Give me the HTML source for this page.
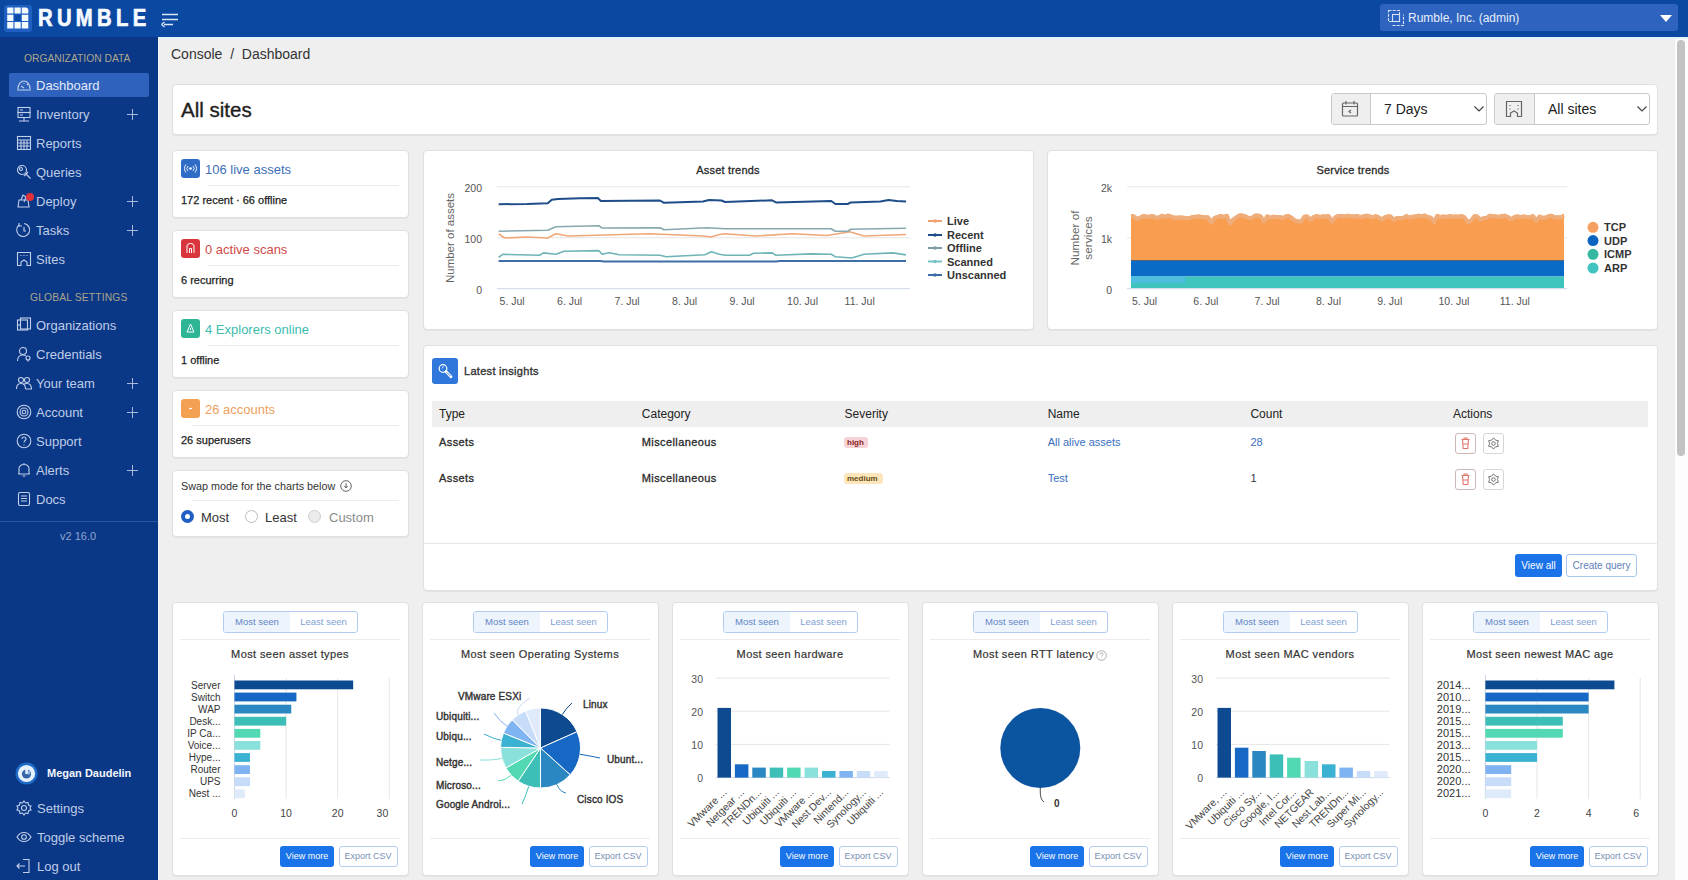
<!DOCTYPE html><html><head><meta charset="utf-8"><title>Rumble Dashboard</title><style>
*{box-sizing:border-box;margin:0;padding:0}
html,body{width:1688px;height:880px;overflow:hidden;background:#efefef;font-family:"Liberation Sans",sans-serif;color:#222}
.abs{position:absolute}
.hdr{position:absolute;left:0;top:0;width:1688px;height:37px;background:#0a48a2}
.side{position:absolute;left:0;top:37px;width:158px;height:843px;background:#0b3886}
.card{position:absolute;background:#fff;border-radius:4px;border:1px solid #e0e0e0;box-shadow:0 1px 1px rgba(0,0,0,.05)}
.t{position:absolute;white-space:nowrap;line-height:1}
.nav{position:absolute;left:36px;font-size:13px;color:#bfcde8;white-space:nowrap;line-height:1}
.plus{position:absolute;left:127px;width:11px;height:11px}
.plus:before{content:"";position:absolute;left:5px;top:0;width:1px;height:11px;background:#a9b9d8}
.plus:after{content:"";position:absolute;left:0;top:5px;width:11px;height:1px;background:#a9b9d8}
svg{position:absolute;overflow:visible}
</style></head><body>
<div class="hdr"></div>
<svg style="left:4px;top:5px" width="28" height="27" viewBox="0 0 28 27">
<rect x="0" y="0" width="28" height="27" rx="3" fill="#1f5fc2"/>
<path d="M3.2 2.4H9.4V8.6H3.2Z M10.5 2.4H16.7V8.6H10.5Z M17.8 2.4H21.5Q24.3 2.4 24.3 5.2V8.6H17.8Z M3.2 9.7H9.4V15.9H3.2Z M17.8 9.7H24.3V15.9H17.8Z M3.2 17H9.4V23.6H3.2Z M10.5 17H16.7V23.6H10.5Z M17.8 17H24.3V23.6H17.8Z" fill="#f4fbff"/>
<rect x="10.5" y="9.7" width="6.2" height="6.2" fill="#0c4aa8"/>
</svg>
<div class="t" style="left:38px;top:7.2px;font-size:23px;font-weight:bold;color:#f4faff;letter-spacing:4.9px;transform:scaleX(0.88);transform-origin:0 0;-webkit-text-stroke:0.7px #f4faff">RUMBLE</div>
<svg style="left:161px;top:13px" width="18" height="15" viewBox="0 0 18 15">
<path d="M1 1.5H17M1 6.5H17M3 11.5H12" stroke="#dbe6f7" stroke-width="1.6" fill="none"/>
<path d="M0.5 11.5L3.5 9M0.5 11.5L3.5 14" stroke="#dbe6f7" stroke-width="1.4" fill="none"/>
</svg>
<div class="abs" style="left:1380px;top:4px;width:298px;height:27px;background:#2e64bf;border-radius:3px"></div>
<svg style="left:1386px;top:8px" width="19" height="19" viewBox="0 0 19 19" fill="none" stroke="#d6e2f7" stroke-width="1.1">
<rect x="2.5" y="2.5" width="11" height="11" stroke-dasharray="3 1.2"/>
<rect x="6.5" y="6.5" width="7" height="7"/>
<path d="M6.5 17.5H17.5V6.5" stroke-dasharray="3 1.2"/>
</svg>
<div class="t" style="left:1408px;top:12px;font-size:12px;color:#e8eefa">Rumble, Inc. (admin)</div>
<svg style="left:1660px;top:15px" width="12" height="7" viewBox="0 0 12 7"><path d="M0 0H12L6 7Z" fill="#fff"/></svg>
<div class="abs" style="left:158px;top:37px;width:1530px;height:2px;background:#e4f3fb"></div>
<div class="side"></div>
<div class="t" style="left:24px;top:54px;font-size:10.3px;color:#aaa58c;letter-spacing:0px">ORGANIZATION DATA</div>
<div class="abs" style="left:9px;top:73px;width:140px;height:24px;background:#2f62bd;border-radius:2px"></div>
<svg style="left:16px;top:77px" width="16" height="16" viewBox="0 0 16 16" fill="none" stroke="#c3d0ea" stroke-width="1.1"><path d="M1 13H15M2 12C2 7 5 4 8 4C11 4 14 7 14 12M5 9L8 11M8 6V7M11 8L12 7"/></svg>
<div class="nav" style="top:79px;color:#e4ebf8">Dashboard</div>
<svg style="left:16px;top:106px" width="16" height="16" viewBox="0 0 16 16" fill="none" stroke="#c3d0ea" stroke-width="1.1"><rect x="2" y="1.5" width="12" height="5"/><rect x="2" y="6.5" width="12" height="5"/><path d="M8 11.5V15M3 15H13M4 4H7M4 9H7"/></svg>
<div class="nav" style="top:108px;color:#bfcde8">Inventory</div>
<div class="plus" style="top:109px"></div>
<svg style="left:16px;top:135px" width="16" height="16" viewBox="0 0 16 16" fill="none" stroke="#c3d0ea" stroke-width="1.1"><rect x="1.5" y="1.5" width="13" height="13"/><path d="M1.5 5H14.5M1.5 8H14.5M1.5 11H14.5M5 5V14.5M8 5V14.5M11 5V14.5"/></svg>
<div class="nav" style="top:137px;color:#bfcde8">Reports</div>
<svg style="left:16px;top:164px" width="16" height="16" viewBox="0 0 16 16" fill="none" stroke="#c3d0ea" stroke-width="1.1"><circle cx="6" cy="6" r="4.5"/><path d="M9.5 9.5L14.5 14.5M8 12L12 8"/><circle cx="5" cy="5" r="1.5"/></svg>
<div class="nav" style="top:166px;color:#bfcde8">Queries</div>
<svg style="left:16px;top:193px" width="16" height="16" viewBox="0 0 16 16" fill="none" stroke="#c3d0ea" stroke-width="1.1"><path d="M2 14H13L12 7H3Z M5 7L7 2L10 4L8 9"/></svg>
<div class="nav" style="top:195px;color:#bfcde8">Deploy</div>
<div class="plus" style="top:196px"></div>
<svg style="left:16px;top:222px" width="16" height="16" viewBox="0 0 16 16" fill="none" stroke="#c3d0ea" stroke-width="1.1"><path d="M3 3A6.5 6.5 0 1 0 8 1.5"/><path d="M3 1V4H6"/><path d="M8 5V9H10"/></svg>
<div class="nav" style="top:224px;color:#bfcde8">Tasks</div>
<div class="plus" style="top:225px"></div>
<svg style="left:16px;top:251px" width="16" height="16" viewBox="0 0 16 16" fill="none" stroke="#c3d0ea" stroke-width="1.1"><path d="M1.5 1.5H14.5V14.5H11V11L8 9L5 11V14.5H1.5Z"/><path d="M5 4V5M11 4V5M8 4V5"/></svg>
<div class="nav" style="top:253px;color:#bfcde8">Sites</div>
<div class="abs" style="left:26px;top:193px;width:8px;height:8px;border-radius:4px;background:#e0303a"></div>
<div class="t" style="left:30px;top:293px;font-size:10.3px;color:#aaa58c;letter-spacing:0.15px">GLOBAL SETTINGS</div>
<svg style="left:16px;top:317px" width="16" height="16" viewBox="0 0 16 16" fill="none" stroke="#c3d0ea" stroke-width="1.1"><rect x="1.5" y="3" width="10" height="10"/><rect x="4.5" y="1" width="10" height="11"/><path d="M1.5 8H4.5"/></svg>
<div class="nav" style="top:319px">Organizations</div>
<svg style="left:16px;top:346px" width="16" height="16" viewBox="0 0 16 16" fill="none" stroke="#c3d0ea" stroke-width="1.1"><circle cx="7" cy="5" r="3.5"/><path d="M1.5 15C1.5 11 4 9 7 9C8 9 9 9.3 9.8 9.8"/><circle cx="12" cy="12" r="2"/><path d="M12 14V15.5"/></svg>
<div class="nav" style="top:348px">Credentials</div>
<svg style="left:16px;top:375px" width="16" height="16" viewBox="0 0 16 16" fill="none" stroke="#c3d0ea" stroke-width="1.1"><circle cx="5" cy="5" r="2.5"/><circle cx="11" cy="5" r="2.5"/><path d="M0.5 14C0.5 10 2.5 8.5 5 8.5C7.5 8.5 9.5 10 9.5 14M7 9.5C8 8.8 9.5 8.5 11 8.5C13.5 8.5 15.5 10 15.5 14H9.5"/></svg>
<div class="nav" style="top:377px">Your team</div>
<div class="plus" style="top:378px"></div>
<svg style="left:16px;top:404px" width="16" height="16" viewBox="0 0 16 16" fill="none" stroke="#c3d0ea" stroke-width="1.1"><circle cx="8" cy="8" r="6.8"/><circle cx="8" cy="8" r="4"/><circle cx="8" cy="8" r="1.8"/></svg>
<div class="nav" style="top:406px">Account</div>
<div class="plus" style="top:407px"></div>
<svg style="left:16px;top:433px" width="16" height="16" viewBox="0 0 16 16" fill="none" stroke="#c3d0ea" stroke-width="1.1"><circle cx="8" cy="8" r="6.8"/><path d="M6 6C6 4.5 7 4 8 4C9.2 4 10 4.8 10 6C10 7.5 8 7.5 8 9.5"/><path d="M8 11.5V12.5"/></svg>
<div class="nav" style="top:435px">Support</div>
<svg style="left:16px;top:462px" width="16" height="16" viewBox="0 0 16 16" fill="none" stroke="#c3d0ea" stroke-width="1.1"><path d="M3 12V7C3 4 5 2.5 8 2.5C11 2.5 13 4 13 7V12H3Z M2 12H14M6.5 14H9.5M8 1V2.5"/></svg>
<div class="nav" style="top:464px">Alerts</div>
<div class="plus" style="top:465px"></div>
<svg style="left:16px;top:491px" width="16" height="16" viewBox="0 0 16 16" fill="none" stroke="#c3d0ea" stroke-width="1.1"><rect x="2.5" y="1.5" width="11" height="13" rx="1.5"/><path d="M5 5H11M5 7.5H11M5 10H11"/></svg>
<div class="nav" style="top:493px">Docs</div>
<div class="abs" style="left:0;top:521px;width:158px;height:1px;background:#2a559c"></div>
<div class="t" style="left:60px;top:531px;font-size:11px;color:#8fa6cf">v2 16.0</div>
<svg style="left:15px;top:762px" width="23" height="23" viewBox="0 0 23 23"><circle cx="11.5" cy="11.5" r="11" fill="#1e6bc8"/><circle cx="11.5" cy="11.5" r="8.6" fill="#e6f3ff"/><circle cx="11.5" cy="12" r="4.6" fill="#3566a8"/><rect x="10.3" y="4" width="2.6" height="8" fill="#e6f3ff"/><rect x="12.9" y="9" width="2.2" height="3.5" fill="#8fb4dc"/></svg>
<div class="t" style="left:47px;top:768px;font-size:11px;font-weight:bold;color:#f2f6fd">Megan Daudelin</div>
<svg style="left:16px;top:800px" width="16" height="16" viewBox="0 0 16 16" fill="none" stroke="#c3d0ea" stroke-width="1.1"><circle cx="8" cy="8" r="2.5"/><path d="M8 1L9.5 3L12 2.5L12.5 5L15 6L14 8L15 10L12.5 11L12 13.5L9.5 13L8 15L6.5 13L4 13.5L3.5 11L1 10L2 8L1 6L3.5 5L4 2.5L6.5 3Z"/></svg>
<div class="nav" style="left:37px;top:802px">Settings</div>
<svg style="left:16px;top:829px" width="16" height="16" viewBox="0 0 16 16" fill="none" stroke="#c3d0ea" stroke-width="1.1"><path d="M1 8C3 4.5 5.5 3.5 8 3.5C10.5 3.5 13 4.5 15 8C13 11.5 10.5 12.5 8 12.5C5.5 12.5 3 11.5 1 8Z"/><circle cx="8" cy="8" r="2.3"/></svg>
<div class="nav" style="left:37px;top:831px">Toggle scheme</div>
<svg style="left:16px;top:858px" width="16" height="16" viewBox="0 0 16 16" fill="none" stroke="#c3d0ea" stroke-width="1.1"><path d="M7 1.5H13V14.5H7M1 8H9M3.5 5.5L1 8L3.5 10.5"/></svg>
<div class="nav" style="left:37px;top:860px">Log out</div>
<div class="t" style="left:171px;top:47px;font-size:14px;color:#333">Console&nbsp; /&nbsp; Dashboard</div>
<div class="abs" style="left:1674px;top:39px;width:14px;height:841px;background:#fdfdfd;border-left:1px solid #ececec"></div>
<div class="abs" style="left:1677px;top:40px;width:8px;height:416px;border-radius:4px;background:#c3c3c3"></div>
<div class="card" style="left:172px;top:84px;width:1486px;height:51px"></div>
<div class="t" style="left:181px;top:100px;font-size:20.5px;color:#1e1e1e;-webkit-text-stroke:0.35px #1e1e1e">All sites</div>
<div class="abs" style="left:1331px;top:93px;width:156px;height:32px;border:1px solid #c9c9c9;border-radius:3px;background:#fff;overflow:hidden"><div class="abs" style="left:0;top:0;width:39px;height:30px;background:#efefef;border-right:1px solid #c9c9c9"></div></div>
<div class="t" style="left:1384px;top:102px;font-size:14px;color:#222">7 Days</div>
<svg style="left:1474px;top:106px" width="10" height="6" viewBox="0 0 10 6"><path d="M0.5 0.5L5 5L9.5 0.5" stroke="#444" stroke-width="1.2" fill="none"/></svg>
<svg style="left:1341px;top:100px" width="18" height="18" viewBox="0 0 18 18" fill="none" stroke="#666" stroke-width="1.2"><rect x="1.5" y="3" width="15" height="13" rx="1"/><path d="M1.5 6.5H16.5M5 1V4.5M13 1V4.5M10 10L8 11.5L10 13"/></svg>
<div class="abs" style="left:1494px;top:93px;width:156px;height:32px;border:1px solid #c9c9c9;border-radius:3px;background:#fff;overflow:hidden"><div class="abs" style="left:0;top:0;width:40px;height:30px;background:#efefef;border-right:1px solid #c9c9c9"></div></div>
<div class="t" style="left:1548px;top:102px;font-size:14px;color:#222">All sites</div>
<svg style="left:1637px;top:106px" width="10" height="6" viewBox="0 0 10 6"><path d="M0.5 0.5L5 5L9.5 0.5" stroke="#444" stroke-width="1.2" fill="none"/></svg>
<svg style="left:1505px;top:100px" width="18" height="18" viewBox="0 0 18 18" fill="none" stroke="#666" stroke-width="1.2"><path d="M1.5 1.5H16.5V16.5H12.5V13L9 11L5.5 13V16.5H1.5Z"/><path d="M5 5V6M13 5V6M5 8.5V9.5M13 8.5V9.5"/></svg>
<div class="card" style="left:172px;top:150px;width:237px;height:68px"></div>
<div class="abs" style="left:181px;top:159px;width:19px;height:19px;border-radius:3px;background:#2f6cc6"></div>
<svg style="left:181px;top:159px" width="19" height="19" viewBox="0 0 19 19"><circle cx="9.5" cy="9.5" r="1.3" fill="#fff"/><path d="M7 7A3.5 3.5 0 0 0 7 12M12 7A3.5 3.5 0 0 1 12 12M5 5.5A6 6 0 0 0 5 13.5M14 5.5A6 6 0 0 1 14 13.5" stroke="#fff" stroke-width="0.9" fill="none"/></svg>
<div class="t" style="left:205px;top:163px;font-size:13px;color:#3c6fb9">106 live assets</div>
<div class="abs" style="left:208px;top:185px;width:191px;height:1px;background:#ececec"></div>
<div class="t" style="left:181px;top:195px;font-size:11px;color:#222;-webkit-text-stroke:0.25px #222">172 recent · 66 offline</div>
<div class="card" style="left:172px;top:230px;width:237px;height:68px"></div>
<div class="abs" style="left:181px;top:239px;width:19px;height:19px;border-radius:3px;background:#d8353c"></div>
<svg style="left:181px;top:239px" width="19" height="19" viewBox="0 0 19 19"><path d="M6 14V7C6 5.5 7.5 4.5 9.5 4.5C11.5 4.5 13 5.5 13 7V14M8.5 14V9.5H10.5V14" stroke="#fff" stroke-width="1" fill="none"/></svg>
<div class="t" style="left:205px;top:243px;font-size:13px;color:#cf4a4a">0 active scans</div>
<div class="abs" style="left:208px;top:265px;width:191px;height:1px;background:#ececec"></div>
<div class="t" style="left:181px;top:275px;font-size:11px;color:#222;-webkit-text-stroke:0.25px #222">6 recurring</div>
<div class="card" style="left:172px;top:310px;width:237px;height:68px"></div>
<div class="abs" style="left:181px;top:319px;width:19px;height:19px;border-radius:3px;background:#2db594"></div>
<svg style="left:181px;top:319px" width="19" height="19" viewBox="0 0 19 19"><path d="M9.5 5L13 13H6Z M9.5 9V11" stroke="#fff" stroke-width="1" fill="none"/></svg>
<div class="t" style="left:205px;top:323px;font-size:13px;color:#3bbdae">4 Explorers online</div>
<div class="abs" style="left:208px;top:345px;width:191px;height:1px;background:#ececec"></div>
<div class="t" style="left:181px;top:355px;font-size:11px;color:#222;-webkit-text-stroke:0.25px #222">1 offline</div>
<div class="card" style="left:172px;top:390px;width:237px;height:68px"></div>
<div class="abs" style="left:181px;top:399px;width:19px;height:19px;border-radius:3px;background:#f4a052"></div>
<svg style="left:181px;top:399px" width="19" height="19" viewBox="0 0 19 19"><path d="M8 9.5H11" stroke="#fff" stroke-width="1.2"/></svg>
<div class="t" style="left:205px;top:403px;font-size:13px;color:#eda060">26 accounts</div>
<div class="abs" style="left:192px;top:425px;width:207px;height:1px;background:#ececec"></div>
<div class="t" style="left:181px;top:435px;font-size:11px;color:#222;-webkit-text-stroke:0.25px #222">26 superusers</div>
<div class="card" style="left:172px;top:470px;width:237px;height:67px"></div>
<div class="t" style="left:181px;top:481px;font-size:10.8px;color:#333">Swap mode for the charts below</div>
<svg style="left:340px;top:480px" width="12" height="12" viewBox="0 0 12 12"><circle cx="6" cy="6" r="5.3" fill="none" stroke="#555" stroke-width="0.9"/><path d="M6 3V7.5M4.3 6L6 8L7.7 6" stroke="#555" stroke-width="0.9" fill="none"/></svg>
<div class="abs" style="left:192px;top:500px;width:207px;height:1px;background:#ececec"></div>
<div class="abs" style="left:181px;top:510px;width:13px;height:13px;border-radius:7px;background:#1f5fc4"></div>
<div class="abs" style="left:185px;top:514px;width:5px;height:5px;border-radius:3px;background:#fff"></div>
<div class="t" style="left:201px;top:511px;font-size:13px;color:#333">Most</div>
<div class="abs" style="left:245px;top:510px;width:13px;height:13px;border-radius:7px;border:1px solid #bdbdbd;background:#fff"></div>
<div class="t" style="left:265px;top:511px;font-size:13px;color:#333">Least</div>
<div class="abs" style="left:308px;top:510px;width:13px;height:13px;border-radius:7px;border:1px solid #cfcfcf;background:#ececec"></div>
<div class="t" style="left:329px;top:511px;font-size:13px;color:#8a8a8a">Custom</div>
<div class="card" style="left:423px;top:150px;width:611px;height:180px"></div>
<div class="t" style="left:0;top:165px;width:1456px;text-align:center;font-size:11px;color:#2a2a2a;letter-spacing:0.2px;-webkit-text-stroke:0.3px #2a2a2a">Asset trends</div>
<svg style="left:0;top:0" width="1688" height="880"><line x1="497" y1="186.8" x2="910" y2="186.8" stroke="#e6e6e6" stroke-width="1"/><text x="482" y="191.8" text-anchor="end" font-size="10.5" fill="#555" font-family="Liberation Sans">200</text><line x1="497" y1="237.75" x2="910" y2="237.75" stroke="#e6e6e6" stroke-width="1"/><text x="482" y="242.75" text-anchor="end" font-size="10.5" fill="#555" font-family="Liberation Sans">100</text><line x1="497" y1="288.7" x2="910" y2="288.7" stroke="#ccd6eb" stroke-width="1"/><text x="482" y="293.7" text-anchor="end" font-size="10.5" fill="#555" font-family="Liberation Sans">0</text><text transform="translate(454,238) rotate(-90)" text-anchor="middle" font-size="11.5" fill="#666" font-family="Liberation Sans">Number of assets</text><text x="499.6" y="305" font-size="10.5" fill="#555" font-family="Liberation Sans">5. Jul</text><text x="557.1" y="305" font-size="10.5" fill="#555" font-family="Liberation Sans">6. Jul</text><text x="614.6" y="305" font-size="10.5" fill="#555" font-family="Liberation Sans">7. Jul</text><text x="672.1" y="305" font-size="10.5" fill="#555" font-family="Liberation Sans">8. Jul</text><text x="729.6" y="305" font-size="10.5" fill="#555" font-family="Liberation Sans">9. Jul</text><text x="787.1" y="305" font-size="10.5" fill="#555" font-family="Liberation Sans">10. Jul</text><text x="844.6" y="305" font-size="10.5" fill="#555" font-family="Liberation Sans">11. Jul</text><polyline fill="none" stroke="#3d6fa6" stroke-width="2" stroke-linejoin="round" points="498.6,261.0 600.0,261.0 604.0,261.5 776.0,261.5 780.0,261.0 906.0,261.0"/><polyline fill="none" stroke="#6fb5b8" stroke-width="1.6" stroke-linejoin="round" points="498.6,257.4 502.7,254.3 539.5,255.3 543.6,252.9 555.9,254.3 564.0,251.2 598.8,250.6 602.0,254.3 609.0,252.7 619.3,254.7 660.0,255.3 666.3,256.7 705.0,254.7 711.3,251.8 719.5,254.3 725.0,255.3 749.5,255.3 753.6,253.3 772.0,252.9 776.0,255.3 810.9,253.9 831.3,254.3 835.4,256.7 851.8,258.0 864.0,254.3 892.7,252.9 906.0,254.9"/><polyline fill="none" stroke="#f0a878" stroke-width="1.6" stroke-linejoin="round" points="498.6,233.8 504.8,238.0 527.0,237.0 547.7,238.0 555.9,233.8 568.0,236.0 650.0,233.8 703.0,236.0 711.0,237.0 719.5,234.5 725.0,233.8 755.7,236.0 792.5,233.8 827.0,235.5 849.7,231.8 864.0,236.0 906.0,234.5"/><polyline fill="none" stroke="#86a9b0" stroke-width="1.6" stroke-linejoin="round" points="498.6,231.2 547.7,230.2 555.9,226.7 598.8,225.7 602.0,228.0 660.0,227.7 664.0,229.8 707.0,227.7 725.0,228.7 831.0,228.7 835.4,231.2 847.7,231.2 850.8,229.3 906.0,228.3"/><polyline fill="none" stroke="#1f4d8a" stroke-width="2" stroke-linejoin="round" points="498.6,204.2 527.0,204.0 547.7,203.2 551.8,199.7 558.0,199.0 580.4,198.3 597.8,198.0 600.9,201.0 660.0,200.5 664.0,202.8 703.0,201.5 709.0,200.0 721.5,200.5 725.0,202.0 772.0,200.3 776.0,202.4 831.3,201.0 835.4,204.0 847.7,204.0 850.8,202.4 880.4,201.5 888.6,200.0 896.8,201.0 906.0,201.5"/><line x1="928" y1="221" x2="942" y2="221" stroke="#f0a070" stroke-width="2"/><circle cx="935" cy="221" r="1.8" fill="#f0a070"/><text x="947" y="225" font-size="11" font-weight="bold" fill="#333" font-family="Liberation Sans">Live</text><line x1="928" y1="235" x2="942" y2="235" stroke="#1f4d8a" stroke-width="2"/><circle cx="935" cy="235" r="1.8" fill="#1f4d8a"/><text x="947" y="239" font-size="11" font-weight="bold" fill="#333" font-family="Liberation Sans">Recent</text><line x1="928" y1="248" x2="942" y2="248" stroke="#7d9ba3" stroke-width="2"/><circle cx="935" cy="248" r="1.8" fill="#7d9ba3"/><text x="947" y="252" font-size="11" font-weight="bold" fill="#333" font-family="Liberation Sans">Offline</text><line x1="928" y1="261.5" x2="942" y2="261.5" stroke="#77c2c3" stroke-width="2"/><circle cx="935" cy="261.5" r="1.8" fill="#77c2c3"/><text x="947" y="265.5" font-size="11" font-weight="bold" fill="#333" font-family="Liberation Sans">Scanned</text><line x1="928" y1="275" x2="942" y2="275" stroke="#3d6fa6" stroke-width="2"/><circle cx="935" cy="275" r="1.8" fill="#3d6fa6"/><text x="947" y="279" font-size="11" font-weight="bold" fill="#333" font-family="Liberation Sans">Unscanned</text></svg>
<div class="card" style="left:1047px;top:150px;width:611px;height:180px"></div>
<div class="t" style="left:1048px;top:165px;width:610px;text-align:center;font-size:11px;color:#2a2a2a;letter-spacing:0.2px;-webkit-text-stroke:0.3px #2a2a2a">Service trends</div>
<svg style="left:0;top:0" width="1688" height="880"><line x1="1127" y1="186.8" x2="1567" y2="186.8" stroke="#e6e6e6" stroke-width="1"/><text x="1112" y="191.8" text-anchor="end" font-size="10.5" fill="#555" font-family="Liberation Sans">2k</text><line x1="1127" y1="237.75" x2="1567" y2="237.75" stroke="#e6e6e6" stroke-width="1"/><text x="1112" y="242.75" text-anchor="end" font-size="10.5" fill="#555" font-family="Liberation Sans">1k</text><line x1="1127" y1="288.7" x2="1567" y2="288.7" stroke="#ccd6eb" stroke-width="1"/><text x="1112" y="293.7" text-anchor="end" font-size="10.5" fill="#555" font-family="Liberation Sans">0</text><text transform="translate(1079,238) rotate(-90)" text-anchor="middle" font-size="11.8" fill="#666" font-family="Liberation Sans">Number of</text><text transform="translate(1092,238) rotate(-90)" text-anchor="middle" font-size="11.8" fill="#666" font-family="Liberation Sans">services</text><text x="1132.0" y="305" font-size="10.5" fill="#555" font-family="Liberation Sans">5. Jul</text><text x="1193.3" y="305" font-size="10.5" fill="#555" font-family="Liberation Sans">6. Jul</text><text x="1254.6" y="305" font-size="10.5" fill="#555" font-family="Liberation Sans">7. Jul</text><text x="1315.9" y="305" font-size="10.5" fill="#555" font-family="Liberation Sans">8. Jul</text><text x="1377.2" y="305" font-size="10.5" fill="#555" font-family="Liberation Sans">9. Jul</text><text x="1438.5" y="305" font-size="10.5" fill="#555" font-family="Liberation Sans">10. Jul</text><text x="1499.8" y="305" font-size="10.5" fill="#555" font-family="Liberation Sans">11. Jul</text><polygon fill="#f99d50" points="1131,261 1131.0,214.1 1134.1,214.4 1137.2,217.1 1140.3,215.6 1143.4,214.1 1146.5,214.7 1149.6,214.7 1152.7,213.9 1155.7,215.7 1158.8,215.4 1161.9,213.7 1165.0,215.0 1168.1,213.6 1171.2,214.7 1174.3,215.7 1177.4,215.8 1180.5,215.5 1183.6,215.8 1186.7,216.6 1189.8,215.9 1192.9,215.1 1196.0,214.8 1199.0,214.4 1202.1,215.0 1205.2,215.2 1208.3,215.6 1211.4,220.6 1214.5,215.9 1217.6,214.9 1220.7,214.0 1223.8,214.9 1226.9,213.7 1230.0,221.2 1233.1,217.7 1236.2,215.4 1239.2,213.6 1242.3,213.6 1245.4,214.3 1248.5,216.0 1251.6,216.0 1254.7,213.7 1257.8,213.6 1260.9,214.5 1264.0,219.4 1267.1,214.3 1270.2,215.7 1273.3,214.7 1276.4,215.1 1279.5,214.9 1282.5,215.9 1285.6,214.6 1288.7,214.1 1291.8,215.9 1294.9,218.5 1298.0,219.4 1301.1,219.6 1304.2,214.7 1307.3,214.4 1310.4,217.6 1313.5,215.2 1316.6,214.1 1319.7,215.0 1322.8,214.4 1325.8,214.4 1328.9,214.3 1332.0,219.7 1335.1,215.3 1338.2,214.1 1341.3,214.1 1344.4,214.6 1347.5,213.8 1350.6,214.3 1353.7,214.6 1356.8,213.9 1359.9,215.1 1363.0,214.6 1366.1,213.8 1369.2,214.0 1372.2,215.6 1375.3,214.2 1378.4,215.1 1381.5,217.5 1384.6,215.5 1387.7,214.4 1390.8,214.5 1393.9,217.8 1397.0,215.9 1400.1,216.0 1403.2,215.9 1406.3,214.1 1409.4,215.6 1412.5,214.8 1415.5,214.4 1418.6,213.7 1421.7,214.2 1424.8,213.6 1427.9,215.2 1431.0,215.7 1434.1,219.9 1437.2,213.9 1440.3,215.2 1443.4,214.5 1446.5,215.0 1449.6,214.1 1452.7,214.7 1455.8,214.4 1458.8,214.8 1461.9,213.9 1465.0,215.8 1468.1,220.1 1471.2,218.7 1474.3,214.2 1477.4,214.6 1480.5,217.7 1483.6,216.1 1486.7,215.9 1489.8,213.7 1492.9,214.3 1496.0,214.4 1499.0,215.0 1502.1,214.0 1505.2,213.8 1508.3,215.3 1511.4,217.2 1514.5,215.0 1517.6,214.5 1520.7,215.1 1523.8,214.4 1526.9,215.3 1530.0,215.2 1533.1,214.1 1536.2,218.9 1539.3,214.6 1542.3,215.8 1545.4,215.7 1548.5,214.2 1551.6,213.8 1554.7,215.2 1557.8,215.5 1560.9,215.3 1564.0,213.8 1564,261"/><polyline fill="none" stroke="#f0ad7c" stroke-width="4" stroke-linejoin="round" points="1131.0,216.1 1134.1,216.4 1137.2,219.1 1140.3,217.6 1143.4,216.1 1146.5,216.7 1149.6,216.7 1152.7,215.9 1155.7,217.7 1158.8,217.4 1161.9,215.7 1165.0,217.0 1168.1,215.6 1171.2,216.7 1174.3,217.7 1177.4,217.8 1180.5,217.5 1183.6,217.8 1186.7,218.6 1189.8,217.9 1192.9,217.1 1196.0,216.8 1199.0,216.4 1202.1,217.0 1205.2,217.2 1208.3,217.6 1211.4,222.6 1214.5,217.9 1217.6,216.9 1220.7,216.0 1223.8,216.9 1226.9,215.7 1230.0,223.2 1233.1,219.7 1236.2,217.4 1239.2,215.6 1242.3,215.6 1245.4,216.3 1248.5,218.0 1251.6,218.0 1254.7,215.7 1257.8,215.6 1260.9,216.5 1264.0,221.4 1267.1,216.3 1270.2,217.7 1273.3,216.7 1276.4,217.1 1279.5,216.9 1282.5,217.9 1285.6,216.6 1288.7,216.1 1291.8,217.9 1294.9,220.5 1298.0,221.4 1301.1,221.6 1304.2,216.7 1307.3,216.4 1310.4,219.6 1313.5,217.2 1316.6,216.1 1319.7,217.0 1322.8,216.4 1325.8,216.4 1328.9,216.3 1332.0,221.7 1335.1,217.3 1338.2,216.1 1341.3,216.1 1344.4,216.6 1347.5,215.8 1350.6,216.3 1353.7,216.6 1356.8,215.9 1359.9,217.1 1363.0,216.6 1366.1,215.8 1369.2,216.0 1372.2,217.6 1375.3,216.2 1378.4,217.1 1381.5,219.5 1384.6,217.5 1387.7,216.4 1390.8,216.5 1393.9,219.8 1397.0,217.9 1400.1,218.0 1403.2,217.9 1406.3,216.1 1409.4,217.6 1412.5,216.8 1415.5,216.4 1418.6,215.7 1421.7,216.2 1424.8,215.6 1427.9,217.2 1431.0,217.7 1434.1,221.9 1437.2,215.9 1440.3,217.2 1443.4,216.5 1446.5,217.0 1449.6,216.1 1452.7,216.7 1455.8,216.4 1458.8,216.8 1461.9,215.9 1465.0,217.8 1468.1,222.1 1471.2,220.7 1474.3,216.2 1477.4,216.6 1480.5,219.7 1483.6,218.1 1486.7,217.9 1489.8,215.7 1492.9,216.3 1496.0,216.4 1499.0,217.0 1502.1,216.0 1505.2,215.8 1508.3,217.3 1511.4,219.2 1514.5,217.0 1517.6,216.5 1520.7,217.1 1523.8,216.4 1526.9,217.3 1530.0,217.2 1533.1,216.1 1536.2,220.9 1539.3,216.6 1542.3,217.8 1545.4,217.7 1548.5,216.2 1551.6,215.8 1554.7,217.2 1557.8,217.5 1560.9,217.3 1564.0,215.8"/><rect x="1131" y="260" width="433" height="16.5" fill="#0a6bc6"/><line x1="1131" y1="260.5" x2="1564" y2="260.5" stroke="#8a5a30" stroke-width="1" opacity="0.6"/><rect x="1131" y="276.5" width="433" height="11.5" fill="#3fc3bd"/><rect x="1131" y="276.5" width="54" height="6.5" fill="#4dbde0"/><circle cx="1593" cy="227.3" r="5.5" fill="#f5a060"/><text x="1604" y="231.3" font-size="11" font-weight="bold" fill="#333" font-family="Liberation Sans">TCP</text><circle cx="1593" cy="240.6" r="5.5" fill="#0a64c0"/><text x="1604" y="244.6" font-size="11" font-weight="bold" fill="#333" font-family="Liberation Sans">UDP</text><circle cx="1593" cy="254.3" r="5.5" fill="#36b8a0"/><text x="1604" y="258.3" font-size="11" font-weight="bold" fill="#333" font-family="Liberation Sans">ICMP</text><circle cx="1593" cy="268" r="5.5" fill="#40c4c0"/><text x="1604" y="272" font-size="11" font-weight="bold" fill="#333" font-family="Liberation Sans">ARP</text></svg>
<div class="card" style="left:423px;top:345px;width:1235px;height:246px"></div>
<div class="abs" style="left:432px;top:358px;width:26px;height:26px;border-radius:3px;background:#2f77db"></div>
<svg style="left:432px;top:358px" width="26" height="26" viewBox="0 0 26 26" fill="none" stroke="#fff" stroke-width="1.2"><circle cx="11" cy="10.5" r="3.8"/><path d="M11.5 8.5L10 10.5" stroke-width="1"/><path d="M14 13.5L19 18.8" stroke-width="2.8" stroke-linecap="round"/><path d="M15.2 14.7L18.2 17.8" stroke="#2f77db" stroke-width="0.9" stroke-linecap="round"/></svg>
<div class="t" style="left:464px;top:366px;font-size:11px;color:#333;letter-spacing:0.3px;-webkit-text-stroke:0.35px #333">Latest insights</div>
<div class="abs" style="left:432px;top:401px;width:1216px;height:26px;background:#efefef"></div>
<div class="t" style="left:439px;top:408px;font-size:12px;color:#222">Type</div>
<div class="t" style="left:641.8px;top:408px;font-size:12px;color:#222">Category</div>
<div class="t" style="left:844.6px;top:408px;font-size:12px;color:#222">Severity</div>
<div class="t" style="left:1047.7px;top:408px;font-size:12px;color:#222">Name</div>
<div class="t" style="left:1250.4px;top:408px;font-size:12px;color:#222">Count</div>
<div class="t" style="left:1453px;top:408px;font-size:12px;color:#222">Actions</div>
<div class="t" style="left:439px;top:437px;font-size:11px;color:#2a2a2a;letter-spacing:0.4px;-webkit-text-stroke:0.3px #2a2a2a">Assets</div>
<div class="t" style="left:641.8px;top:437px;font-size:11px;color:#2a2a2a;letter-spacing:0.4px;-webkit-text-stroke:0.3px #2a2a2a">Miscellaneous</div>
<div class="abs" style="left:844px;top:437px;width:24px;height:11px;border-radius:3px;background:#f6d3d6"></div>
<div class="t" style="left:847px;top:439px;font-size:8px;font-weight:bold;color:#8a1a22">high</div>
<div class="t" style="left:1047.7px;top:437px;font-size:11px;color:#3a6fc0">All alive assets</div>
<div class="t" style="left:1250.4px;top:437px;font-size:11px;color:#3a6fc0">28</div>
<div class="abs" style="left:1455px;top:433px;width:21px;height:21px;border-radius:3px;border:1px solid #cdb8b8"></div>
<svg style="left:1455px;top:433px" width="21" height="21" viewBox="0 0 21 21" fill="none" stroke="#e2766a" stroke-width="1.1"><path d="M6.5 6.5H14.5M9 6.5V5H12V6.5M7.5 6.5L8.2 15.5H12.8L13.5 6.5M8.2 11H12.8"/></svg>
<div class="abs" style="left:1483px;top:433px;width:21px;height:21px;border-radius:3px;border:1px solid #d6d6d6"></div>
<svg style="left:1483px;top:433px" width="21" height="21" viewBox="0 0 21 21" fill="none" stroke="#666" stroke-width="0.9" stroke-linejoin="round"><circle cx="10.5" cy="10.5" r="1.8"/><path d="M10.50 4.90 L12.45 7.12 L15.35 7.70 L14.40 10.50 L15.35 13.30 L12.45 13.88 L10.50 16.10 L8.55 13.88 L5.65 13.30 L6.60 10.50 L5.65 7.70 L8.55 7.12Z"/></svg>
<div class="t" style="left:439px;top:473px;font-size:11px;color:#2a2a2a;letter-spacing:0.4px;-webkit-text-stroke:0.3px #2a2a2a">Assets</div>
<div class="t" style="left:641.8px;top:473px;font-size:11px;color:#2a2a2a;letter-spacing:0.4px;-webkit-text-stroke:0.3px #2a2a2a">Miscellaneous</div>
<div class="abs" style="left:844px;top:473px;width:39px;height:11px;border-radius:3px;background:#fde6bb"></div>
<div class="t" style="left:847px;top:475px;font-size:8px;font-weight:bold;color:#6b4c12">medium</div>
<div class="t" style="left:1047.7px;top:473px;font-size:11px;color:#3a6fc0">Test</div>
<div class="t" style="left:1250.4px;top:473px;font-size:11px;color:#334">1</div>
<div class="abs" style="left:1455px;top:469px;width:21px;height:21px;border-radius:3px;border:1px solid #cdb8b8"></div>
<svg style="left:1455px;top:469px" width="21" height="21" viewBox="0 0 21 21" fill="none" stroke="#e2766a" stroke-width="1.1"><path d="M6.5 6.5H14.5M9 6.5V5H12V6.5M7.5 6.5L8.2 15.5H12.8L13.5 6.5M8.2 11H12.8"/></svg>
<div class="abs" style="left:1483px;top:469px;width:21px;height:21px;border-radius:3px;border:1px solid #d6d6d6"></div>
<svg style="left:1483px;top:469px" width="21" height="21" viewBox="0 0 21 21" fill="none" stroke="#666" stroke-width="0.9" stroke-linejoin="round"><circle cx="10.5" cy="10.5" r="1.8"/><path d="M10.50 4.90 L12.45 7.12 L15.35 7.70 L14.40 10.50 L15.35 13.30 L12.45 13.88 L10.50 16.10 L8.55 13.88 L5.65 13.30 L6.60 10.50 L5.65 7.70 L8.55 7.12Z"/></svg>
<div class="abs" style="left:423px;top:543px;width:1235px;height:1px;background:#e6e6e6"></div>
<div class="abs" style="left:1515px;top:554px;width:47px;height:23px;border-radius:3px;background:#1a73e8"></div>
<div class="t" style="left:1515px;top:561px;width:47px;text-align:center;font-size:10px;color:#fff">View all</div>
<div class="abs" style="left:1566px;top:554px;width:71px;height:23px;border-radius:3px;border:1px solid #a9c6f0;background:#fff"></div>
<div class="t" style="left:1566px;top:561px;width:71px;text-align:center;font-size:10px;color:#5f7fb8">Create query</div>
<div class="card" style="left:172px;top:602px;width:237px;height:274px"></div>
<div class="abs" style="left:223px;top:611px;width:135px;height:22px;border:1px solid #b3cdf2;border-radius:3px;background:#fff"></div>
<div class="abs" style="left:224px;top:612px;width:66px;height:20px;background:#eef4fc;border-radius:2px 0 0 2px"></div>
<div class="t" style="left:224px;top:617px;width:66px;text-align:center;font-size:9.5px;color:#5f86c8">Most seen</div>
<div class="t" style="left:290px;top:617px;width:67px;text-align:center;font-size:9.5px;color:#7f9fd6">Least seen</div>
<div class="abs" style="left:180px;top:639px;width:220px;height:1px;background:#ececec"></div>
<div class="t" style="left:172px;top:649px;width:236px;text-align:center;font-size:11px;color:#333;letter-spacing:0.4px;-webkit-text-stroke:0.2px #333">Most seen asset types</div>
<div class="abs" style="left:180px;top:838px;width:220px;height:1px;background:#ececec"></div>
<div class="abs" style="left:280px;top:846px;width:54px;height:21px;border-radius:3px;background:#1a73e8"></div>
<div class="t" style="left:280px;top:852px;width:54px;text-align:center;font-size:9px;color:#fff">View more</div>
<div class="abs" style="left:338.5px;top:846px;width:59px;height:21px;border-radius:3px;border:1px solid #b5cdf0;background:#fff"></div>
<div class="t" style="left:338.5px;top:852px;width:59px;text-align:center;font-size:9px;color:#7a8fb5">Export CSV</div>
<div class="card" style="left:422px;top:602px;width:237px;height:274px"></div>
<div class="abs" style="left:473px;top:611px;width:135px;height:22px;border:1px solid #b3cdf2;border-radius:3px;background:#fff"></div>
<div class="abs" style="left:474px;top:612px;width:66px;height:20px;background:#eef4fc;border-radius:2px 0 0 2px"></div>
<div class="t" style="left:474px;top:617px;width:66px;text-align:center;font-size:9.5px;color:#5f86c8">Most seen</div>
<div class="t" style="left:540px;top:617px;width:67px;text-align:center;font-size:9.5px;color:#7f9fd6">Least seen</div>
<div class="abs" style="left:430px;top:639px;width:220px;height:1px;background:#ececec"></div>
<div class="t" style="left:422px;top:649px;width:236px;text-align:center;font-size:11px;color:#333;letter-spacing:0.4px;-webkit-text-stroke:0.2px #333">Most seen Operating Systems</div>
<div class="abs" style="left:430px;top:838px;width:220px;height:1px;background:#ececec"></div>
<div class="abs" style="left:530px;top:846px;width:54px;height:21px;border-radius:3px;background:#1a73e8"></div>
<div class="t" style="left:530px;top:852px;width:54px;text-align:center;font-size:9px;color:#fff">View more</div>
<div class="abs" style="left:588.5px;top:846px;width:59px;height:21px;border-radius:3px;border:1px solid #b5cdf0;background:#fff"></div>
<div class="t" style="left:588.5px;top:852px;width:59px;text-align:center;font-size:9px;color:#7a8fb5">Export CSV</div>
<div class="card" style="left:672px;top:602px;width:237px;height:274px"></div>
<div class="abs" style="left:723px;top:611px;width:135px;height:22px;border:1px solid #b3cdf2;border-radius:3px;background:#fff"></div>
<div class="abs" style="left:724px;top:612px;width:66px;height:20px;background:#eef4fc;border-radius:2px 0 0 2px"></div>
<div class="t" style="left:724px;top:617px;width:66px;text-align:center;font-size:9.5px;color:#5f86c8">Most seen</div>
<div class="t" style="left:790px;top:617px;width:67px;text-align:center;font-size:9.5px;color:#7f9fd6">Least seen</div>
<div class="abs" style="left:680px;top:639px;width:220px;height:1px;background:#ececec"></div>
<div class="t" style="left:672px;top:649px;width:236px;text-align:center;font-size:11px;color:#333;letter-spacing:0.4px;-webkit-text-stroke:0.2px #333">Most seen hardware</div>
<div class="abs" style="left:680px;top:838px;width:220px;height:1px;background:#ececec"></div>
<div class="abs" style="left:780px;top:846px;width:54px;height:21px;border-radius:3px;background:#1a73e8"></div>
<div class="t" style="left:780px;top:852px;width:54px;text-align:center;font-size:9px;color:#fff">View more</div>
<div class="abs" style="left:838.5px;top:846px;width:59px;height:21px;border-radius:3px;border:1px solid #b5cdf0;background:#fff"></div>
<div class="t" style="left:838.5px;top:852px;width:59px;text-align:center;font-size:9px;color:#7a8fb5">Export CSV</div>
<div class="card" style="left:922px;top:602px;width:237px;height:274px"></div>
<div class="abs" style="left:973px;top:611px;width:135px;height:22px;border:1px solid #b3cdf2;border-radius:3px;background:#fff"></div>
<div class="abs" style="left:974px;top:612px;width:66px;height:20px;background:#eef4fc;border-radius:2px 0 0 2px"></div>
<div class="t" style="left:974px;top:617px;width:66px;text-align:center;font-size:9.5px;color:#5f86c8">Most seen</div>
<div class="t" style="left:1040px;top:617px;width:67px;text-align:center;font-size:9.5px;color:#7f9fd6">Least seen</div>
<div class="abs" style="left:930px;top:639px;width:220px;height:1px;background:#ececec"></div>
<div class="t" style="left:922px;top:649px;width:223px;text-align:center;font-size:11px;color:#333;letter-spacing:0.4px;-webkit-text-stroke:0.2px #333">Most seen RTT latency</div>
<svg style="left:1096px;top:650px" width="11" height="11" viewBox="0 0 11 11"><circle cx="5.5" cy="5.5" r="4.8" fill="none" stroke="#999" stroke-width="0.8"/><path d="M4 4.3C4 3.3 4.7 2.8 5.5 2.8C6.3 2.8 7 3.3 7 4.2C7 5.2 5.5 5.3 5.5 6.6M5.5 7.8V8.4" stroke="#999" stroke-width="0.8" fill="none"/></svg>
<div class="abs" style="left:930px;top:838px;width:220px;height:1px;background:#ececec"></div>
<div class="abs" style="left:1030px;top:846px;width:54px;height:21px;border-radius:3px;background:#1a73e8"></div>
<div class="t" style="left:1030px;top:852px;width:54px;text-align:center;font-size:9px;color:#fff">View more</div>
<div class="abs" style="left:1088.5px;top:846px;width:59px;height:21px;border-radius:3px;border:1px solid #b5cdf0;background:#fff"></div>
<div class="t" style="left:1088.5px;top:852px;width:59px;text-align:center;font-size:9px;color:#7a8fb5">Export CSV</div>
<div class="card" style="left:1172px;top:602px;width:237px;height:274px"></div>
<div class="abs" style="left:1223px;top:611px;width:135px;height:22px;border:1px solid #b3cdf2;border-radius:3px;background:#fff"></div>
<div class="abs" style="left:1224px;top:612px;width:66px;height:20px;background:#eef4fc;border-radius:2px 0 0 2px"></div>
<div class="t" style="left:1224px;top:617px;width:66px;text-align:center;font-size:9.5px;color:#5f86c8">Most seen</div>
<div class="t" style="left:1290px;top:617px;width:67px;text-align:center;font-size:9.5px;color:#7f9fd6">Least seen</div>
<div class="abs" style="left:1180px;top:639px;width:220px;height:1px;background:#ececec"></div>
<div class="t" style="left:1172px;top:649px;width:236px;text-align:center;font-size:11px;color:#333;letter-spacing:0.4px;-webkit-text-stroke:0.2px #333">Most seen MAC vendors</div>
<div class="abs" style="left:1180px;top:838px;width:220px;height:1px;background:#ececec"></div>
<div class="abs" style="left:1280px;top:846px;width:54px;height:21px;border-radius:3px;background:#1a73e8"></div>
<div class="t" style="left:1280px;top:852px;width:54px;text-align:center;font-size:9px;color:#fff">View more</div>
<div class="abs" style="left:1338.5px;top:846px;width:59px;height:21px;border-radius:3px;border:1px solid #b5cdf0;background:#fff"></div>
<div class="t" style="left:1338.5px;top:852px;width:59px;text-align:center;font-size:9px;color:#7a8fb5">Export CSV</div>
<div class="card" style="left:1422px;top:602px;width:237px;height:274px"></div>
<div class="abs" style="left:1473px;top:611px;width:135px;height:22px;border:1px solid #b3cdf2;border-radius:3px;background:#fff"></div>
<div class="abs" style="left:1474px;top:612px;width:66px;height:20px;background:#eef4fc;border-radius:2px 0 0 2px"></div>
<div class="t" style="left:1474px;top:617px;width:66px;text-align:center;font-size:9.5px;color:#5f86c8">Most seen</div>
<div class="t" style="left:1540px;top:617px;width:67px;text-align:center;font-size:9.5px;color:#7f9fd6">Least seen</div>
<div class="abs" style="left:1430px;top:639px;width:220px;height:1px;background:#ececec"></div>
<div class="t" style="left:1422px;top:649px;width:236px;text-align:center;font-size:11px;color:#333;letter-spacing:0.4px;-webkit-text-stroke:0.2px #333">Most seen newest MAC age</div>
<div class="abs" style="left:1430px;top:838px;width:220px;height:1px;background:#ececec"></div>
<div class="abs" style="left:1530px;top:846px;width:54px;height:21px;border-radius:3px;background:#1a73e8"></div>
<div class="t" style="left:1530px;top:852px;width:54px;text-align:center;font-size:9px;color:#fff">View more</div>
<div class="abs" style="left:1588.5px;top:846px;width:59px;height:21px;border-radius:3px;border:1px solid #b5cdf0;background:#fff"></div>
<div class="t" style="left:1588.5px;top:852px;width:59px;text-align:center;font-size:9px;color:#7a8fb5">Export CSV</div>
<svg style="left:0;top:0" width="1688" height="880"><line x1="234.5" y1="678" x2="234.5" y2="799" stroke="#e6e6e6" stroke-width="1"/><text x="234.5" y="816.5" text-anchor="middle" font-size="10.5" fill="#444" font-family="Liberation Sans">0</text><line x1="286.1" y1="678" x2="286.1" y2="799" stroke="#e6e6e6" stroke-width="1"/><text x="286.1" y="816.5" text-anchor="middle" font-size="10.5" fill="#444" font-family="Liberation Sans">10</text><line x1="337.7" y1="678" x2="337.7" y2="799" stroke="#e6e6e6" stroke-width="1"/><text x="337.7" y="816.5" text-anchor="middle" font-size="10.5" fill="#444" font-family="Liberation Sans">20</text><line x1="389.3" y1="678" x2="389.3" y2="799" stroke="#e6e6e6" stroke-width="1"/><text x="388.3" y="816.5" text-anchor="end" font-size="10.5" fill="#444" font-family="Liberation Sans">30</text><line x1="234.5" y1="675" x2="234.5" y2="799" stroke="#ccd6eb" stroke-width="1"/><rect x="234.5" y="680.5" width="118.68" height="8.8" fill="#0d4a8f"/><text x="220.5" y="688.5" text-anchor="end" font-size="10" fill="#333" font-family="Liberation Sans">Server</text><rect x="234.5" y="692.6" width="61.92" height="8.8" fill="#1668c4"/><text x="220.5" y="700.6" text-anchor="end" font-size="10" fill="#333" font-family="Liberation Sans">Switch</text><rect x="234.5" y="704.7" width="56.760000000000005" height="8.8" fill="#2a87c2"/><text x="220.5" y="712.7" text-anchor="end" font-size="10" fill="#333" font-family="Liberation Sans">WAP</text><rect x="234.5" y="716.8" width="51.6" height="8.8" fill="#3dbfb7"/><text x="220.5" y="724.8" text-anchor="end" font-size="10" fill="#333" font-family="Liberation Sans">Desk...</text><rect x="234.5" y="728.9" width="25.8" height="8.8" fill="#52d9b4"/><text x="220.5" y="736.9" text-anchor="end" font-size="10" fill="#333" font-family="Liberation Sans">IP Ca...</text><rect x="234.5" y="741.0" width="25.8" height="8.8" fill="#8ae0da"/><text x="220.5" y="749.0" text-anchor="end" font-size="10" fill="#333" font-family="Liberation Sans">Voice...</text><rect x="234.5" y="753.1" width="15.48" height="8.8" fill="#3cb2d2"/><text x="220.5" y="761.1" text-anchor="end" font-size="10" fill="#333" font-family="Liberation Sans">Hype...</text><rect x="234.5" y="765.2" width="15.48" height="8.8" fill="#80b3f2"/><text x="220.5" y="773.2" text-anchor="end" font-size="10" fill="#333" font-family="Liberation Sans">Router</text><rect x="234.5" y="777.3" width="15.48" height="8.8" fill="#c6dcf8"/><text x="220.5" y="785.3" text-anchor="end" font-size="10" fill="#333" font-family="Liberation Sans">UPS</text><rect x="234.5" y="789.4" width="10.32" height="8.8" fill="#dfeafa"/><text x="220.5" y="797.4" text-anchor="end" font-size="10" fill="#333" font-family="Liberation Sans">Nest ...</text></svg>
<svg style="left:0;top:0" width="1688" height="880"><line x1="1485.4" y1="678" x2="1485.4" y2="799" stroke="#e6e6e6" stroke-width="1"/><text x="1485.4" y="816.5" text-anchor="middle" font-size="10.5" fill="#444" font-family="Liberation Sans">0</text><line x1="1537.0" y1="678" x2="1537.0" y2="799" stroke="#e6e6e6" stroke-width="1"/><text x="1537.0" y="816.5" text-anchor="middle" font-size="10.5" fill="#444" font-family="Liberation Sans">2</text><line x1="1588.6000000000001" y1="678" x2="1588.6000000000001" y2="799" stroke="#e6e6e6" stroke-width="1"/><text x="1588.6000000000001" y="816.5" text-anchor="middle" font-size="10.5" fill="#444" font-family="Liberation Sans">4</text><line x1="1640.2" y1="678" x2="1640.2" y2="799" stroke="#e6e6e6" stroke-width="1"/><text x="1639.2" y="816.5" text-anchor="end" font-size="10.5" fill="#444" font-family="Liberation Sans">6</text><line x1="1485.4" y1="675" x2="1485.4" y2="799" stroke="#ccd6eb" stroke-width="1"/><rect x="1485.4" y="680.5" width="129.0" height="8.8" fill="#0d4a8f"/><text x="1470.5" y="688.5" text-anchor="end" font-size="11" fill="#333" font-family="Liberation Sans">2014...</text><rect x="1485.4" y="692.6" width="103.2" height="8.8" fill="#1668c4"/><text x="1470.5" y="700.6" text-anchor="end" font-size="11" fill="#333" font-family="Liberation Sans">2010...</text><rect x="1485.4" y="704.7" width="103.2" height="8.8" fill="#2a87c2"/><text x="1470.5" y="712.7" text-anchor="end" font-size="11" fill="#333" font-family="Liberation Sans">2019...</text><rect x="1485.4" y="716.8" width="77.4" height="8.8" fill="#3dbfb7"/><text x="1470.5" y="724.8" text-anchor="end" font-size="11" fill="#333" font-family="Liberation Sans">2015...</text><rect x="1485.4" y="728.9" width="77.4" height="8.8" fill="#52d9b4"/><text x="1470.5" y="736.9" text-anchor="end" font-size="11" fill="#333" font-family="Liberation Sans">2015...</text><rect x="1485.4" y="741.0" width="51.6" height="8.8" fill="#8ae0da"/><text x="1470.5" y="749.0" text-anchor="end" font-size="11" fill="#333" font-family="Liberation Sans">2013...</text><rect x="1485.4" y="753.1" width="51.6" height="8.8" fill="#3cb2d2"/><text x="1470.5" y="761.1" text-anchor="end" font-size="11" fill="#333" font-family="Liberation Sans">2015...</text><rect x="1485.4" y="765.2" width="25.8" height="8.8" fill="#80b3f2"/><text x="1470.5" y="773.2" text-anchor="end" font-size="11" fill="#333" font-family="Liberation Sans">2020...</text><rect x="1485.4" y="777.3" width="25.8" height="8.8" fill="#c6dcf8"/><text x="1470.5" y="785.3" text-anchor="end" font-size="11" fill="#333" font-family="Liberation Sans">2020...</text><rect x="1485.4" y="789.4" width="25.8" height="8.8" fill="#dfeafa"/><text x="1470.5" y="797.4" text-anchor="end" font-size="11" fill="#333" font-family="Liberation Sans">2021...</text></svg>
<svg style="left:0;top:0" width="1688" height="880"><line x1="715.6" y1="777.6" x2="889.7" y2="777.6" stroke="#ccd6eb" stroke-width="1"/><text x="703" y="782.1" text-anchor="end" font-size="10.5" fill="#555" font-family="Liberation Sans">0</text><line x1="715.6" y1="744.4" x2="889.7" y2="744.4" stroke="#e6e6e6" stroke-width="1"/><text x="703" y="748.9" text-anchor="end" font-size="10.5" fill="#555" font-family="Liberation Sans">10</text><line x1="715.6" y1="711.2" x2="889.7" y2="711.2" stroke="#e6e6e6" stroke-width="1"/><text x="703" y="715.7" text-anchor="end" font-size="10.5" fill="#555" font-family="Liberation Sans">20</text><line x1="715.6" y1="678.0" x2="889.7" y2="678.0" stroke="#e6e6e6" stroke-width="1"/><text x="703" y="682.5" text-anchor="end" font-size="10.5" fill="#555" font-family="Liberation Sans">30</text><rect x="717.5" y="707.9" width="13.5" height="69.7" fill="#0d4a8f"/><text transform="translate(727.2,793) rotate(-45)" text-anchor="end" font-size="10.4" fill="#444" font-family="Liberation Sans">VMware ...</text><rect x="734.9" y="764.3" width="13.5" height="13.3" fill="#1668c4"/><text transform="translate(744.7,793) rotate(-45)" text-anchor="end" font-size="10.4" fill="#444" font-family="Liberation Sans">Netgear ...</text><rect x="752.3" y="767.6" width="13.5" height="10.0" fill="#2a87c2"/><text transform="translate(762.1,793) rotate(-45)" text-anchor="end" font-size="10.4" fill="#444" font-family="Liberation Sans">TRENDn...</text><rect x="769.7" y="767.6" width="13.5" height="10.0" fill="#3dbfb7"/><text transform="translate(779.5,793) rotate(-45)" text-anchor="end" font-size="10.4" fill="#444" font-family="Liberation Sans">Ubiquiti ...</text><rect x="787.1" y="767.6" width="13.5" height="10.0" fill="#52d9b4"/><text transform="translate(796.9,793) rotate(-45)" text-anchor="end" font-size="10.4" fill="#444" font-family="Liberation Sans">Ubiquiti ...</text><rect x="804.6" y="767.6" width="13.5" height="10.0" fill="#8ae0da"/><text transform="translate(814.3,793) rotate(-45)" text-anchor="end" font-size="10.4" fill="#444" font-family="Liberation Sans">VMware ...</text><rect x="822.0" y="771.0" width="13.5" height="6.6" fill="#3cb2d2"/><text transform="translate(831.7,793) rotate(-45)" text-anchor="end" font-size="10.4" fill="#444" font-family="Liberation Sans">Nest Dev...</text><rect x="839.4" y="771.0" width="13.5" height="6.6" fill="#80b3f2"/><text transform="translate(849.1,793) rotate(-45)" text-anchor="end" font-size="10.4" fill="#444" font-family="Liberation Sans">Nintend...</text><rect x="856.8" y="771.0" width="13.5" height="6.6" fill="#c6dcf8"/><text transform="translate(866.5,793) rotate(-45)" text-anchor="end" font-size="10.4" fill="#444" font-family="Liberation Sans">Synology...</text><rect x="874.2" y="771.0" width="13.5" height="6.6" fill="#dfeafa"/><text transform="translate(883.9,793) rotate(-45)" text-anchor="end" font-size="10.4" fill="#444" font-family="Liberation Sans">Ubiquiti ...</text></svg>
<svg style="left:0;top:0" width="1688" height="880"><line x1="1215.6" y1="777.6" x2="1389.7" y2="777.6" stroke="#ccd6eb" stroke-width="1"/><text x="1203" y="782.1" text-anchor="end" font-size="10.5" fill="#555" font-family="Liberation Sans">0</text><line x1="1215.6" y1="744.4" x2="1389.7" y2="744.4" stroke="#e6e6e6" stroke-width="1"/><text x="1203" y="748.9" text-anchor="end" font-size="10.5" fill="#555" font-family="Liberation Sans">10</text><line x1="1215.6" y1="711.2" x2="1389.7" y2="711.2" stroke="#e6e6e6" stroke-width="1"/><text x="1203" y="715.7" text-anchor="end" font-size="10.5" fill="#555" font-family="Liberation Sans">20</text><line x1="1215.6" y1="678.0" x2="1389.7" y2="678.0" stroke="#e6e6e6" stroke-width="1"/><text x="1203" y="682.5" text-anchor="end" font-size="10.5" fill="#555" font-family="Liberation Sans">30</text><rect x="1217.5" y="707.9" width="13.5" height="69.7" fill="#0d4a8f"/><text transform="translate(1227.2,793) rotate(-45)" text-anchor="end" font-size="10.4" fill="#444" font-family="Liberation Sans">VMware, ...</text><rect x="1234.9" y="747.7" width="13.5" height="29.9" fill="#1668c4"/><text transform="translate(1244.7,793) rotate(-45)" text-anchor="end" font-size="10.4" fill="#444" font-family="Liberation Sans">Ubiquiti ...</text><rect x="1252.3" y="751.0" width="13.5" height="26.6" fill="#2a87c2"/><text transform="translate(1262.1,793) rotate(-45)" text-anchor="end" font-size="10.4" fill="#444" font-family="Liberation Sans">Cisco Sy...</text><rect x="1269.7" y="754.4" width="13.5" height="23.2" fill="#3dbfb7"/><text transform="translate(1279.5,793) rotate(-45)" text-anchor="end" font-size="10.4" fill="#444" font-family="Liberation Sans">Google, I...</text><rect x="1287.1" y="757.7" width="13.5" height="19.9" fill="#52d9b4"/><text transform="translate(1296.9,793) rotate(-45)" text-anchor="end" font-size="10.4" fill="#444" font-family="Liberation Sans">Intel Cor...</text><rect x="1304.6" y="761.0" width="13.5" height="16.6" fill="#8ae0da"/><text transform="translate(1314.3,793) rotate(-45)" text-anchor="end" font-size="10.4" fill="#444" font-family="Liberation Sans">NETGEAR</text><rect x="1322.0" y="764.3" width="13.5" height="13.3" fill="#3cb2d2"/><text transform="translate(1331.7,793) rotate(-45)" text-anchor="end" font-size="10.4" fill="#444" font-family="Liberation Sans">Nest Lab...</text><rect x="1339.4" y="767.6" width="13.5" height="10.0" fill="#80b3f2"/><text transform="translate(1349.1,793) rotate(-45)" text-anchor="end" font-size="10.4" fill="#444" font-family="Liberation Sans">TRENDn...</text><rect x="1356.8" y="771.0" width="13.5" height="6.6" fill="#c6dcf8"/><text transform="translate(1366.5,793) rotate(-45)" text-anchor="end" font-size="10.4" fill="#444" font-family="Liberation Sans">Super Mi...</text><rect x="1374.2" y="771.0" width="13.5" height="6.6" fill="#dfeafa"/><text transform="translate(1383.9,793) rotate(-45)" text-anchor="end" font-size="10.4" fill="#444" font-family="Liberation Sans">Synology...</text></svg>
<svg style="left:0;top:0" width="1688" height="880"><path d="M540.5,748 L540.50,708.00 A40,40 0 0 1 577.04,731.73 Z" fill="#0d4a8f" stroke="#fff" stroke-width="1"/><path d="M540.5,748 L577.04,731.73 A40,40 0 0 1 570.23,774.77 Z" fill="#1668c4" stroke="#fff" stroke-width="1"/><path d="M540.5,748 L570.23,774.77 A40,40 0 0 1 540.50,788.00 Z" fill="#2a87c2" stroke="#fff" stroke-width="1"/><path d="M540.5,748 L540.50,788.00 A40,40 0 0 1 518.13,781.16 Z" fill="#3dbfb7" stroke="#fff" stroke-width="1"/><path d="M540.5,748 L518.13,781.16 A40,40 0 0 1 505.86,768.00 Z" fill="#52d9b4" stroke="#fff" stroke-width="1"/><path d="M540.5,748 L505.86,768.00 A40,40 0 0 1 500.51,747.30 Z" fill="#8ae0da" stroke="#fff" stroke-width="1"/><path d="M540.5,748 L500.51,747.30 A40,40 0 0 1 503.41,733.02 Z" fill="#3cb2d2" stroke="#fff" stroke-width="1"/><path d="M540.5,748 L503.41,733.02 A40,40 0 0 1 512.22,719.72 Z" fill="#80b3f2" stroke="#fff" stroke-width="1"/><path d="M540.5,748 L512.22,719.72 A40,40 0 0 1 525.52,710.91 Z" fill="#c6dcf8" stroke="#fff" stroke-width="1"/><path d="M540.5,748 L525.52,710.91 A40,40 0 0 1 540.50,708.00 Z" fill="#dfeafa" stroke="#fff" stroke-width="1"/><path d="M562.3,714.5 Q566.6,707.7 572,703" fill="none" stroke="#0d4a8f" stroke-width="1"/><text x="583" y="708" font-size="10" letter-spacing="0.15" stroke="#333" stroke-width="0.4" fill="#333" font-family="Liberation Sans">Linux</text><path d="M580.0,754.3 Q587.9,755.5 600,758" fill="none" stroke="#1668c4" stroke-width="1"/><text x="607" y="763" font-size="10" letter-spacing="0.15" stroke="#333" stroke-width="0.4" fill="#333" font-family="Liberation Sans">Ubunt...</text><path d="M556.8,784.5 Q560.0,791.9 566,793" fill="none" stroke="#2a87c2" stroke-width="1"/><text x="577" y="803" font-size="10" letter-spacing="0.15" stroke="#333" stroke-width="0.4" fill="#333" font-family="Liberation Sans">Cisco IOS</text><path d="M528.8,786.3 Q526.5,793.9 522,804" fill="none" stroke="#3dbfb7" stroke-width="1"/><text x="436" y="808" font-size="10" letter-spacing="0.15" stroke="#333" stroke-width="0.4" fill="#333" font-family="Liberation Sans">Google Androi...</text><path d="M511.2,775.3 Q505.4,780.7 498,781" fill="none" stroke="#52d9b4" stroke-width="1"/><text x="436" y="789" font-size="10" letter-spacing="0.15" stroke="#333" stroke-width="0.4" fill="#333" font-family="Liberation Sans">Microso...</text><path d="M501.9,758.4 Q494.1,760.4 480,760" fill="none" stroke="#8ae0da" stroke-width="1"/><text x="436" y="766" font-size="10" letter-spacing="0.15" stroke="#333" stroke-width="0.4" fill="#333" font-family="Liberation Sans">Netge...</text><path d="M501.2,740.4 Q493.4,738.8 484,734" fill="none" stroke="#3cb2d2" stroke-width="1"/><text x="436" y="740" font-size="10" letter-spacing="0.15" stroke="#333" stroke-width="0.4" fill="#333" font-family="Liberation Sans">Ubiqu...</text><path d="M507.0,726.2 Q500.2,721.9 494,713" fill="none" stroke="#80b3f2" stroke-width="1"/><text x="436" y="720" font-size="10" letter-spacing="0.15" stroke="#333" stroke-width="0.4" fill="#333" font-family="Liberation Sans">Ubiquiti...</text><path d="M518.1,714.8 Q513.7,708.2 530,698" fill="none" stroke="#c6dcf8" stroke-width="1"/><text x="458" y="700" font-size="10" letter-spacing="0.15" stroke="#333" stroke-width="0.4" fill="#333" font-family="Liberation Sans">VMware ESXi</text></svg>
<svg style="left:0;top:0" width="1688" height="880"><circle cx="1040.3" cy="748" r="40" fill="#0b55a0"/><path d="M1040.3 788C1040 796 1041 800 1044 802" stroke="#444" stroke-width="1" fill="none"/><text x="1054" y="807" font-size="10" font-weight="bold" fill="#333" font-family="Liberation Sans">0</text></svg>
</body></html>
